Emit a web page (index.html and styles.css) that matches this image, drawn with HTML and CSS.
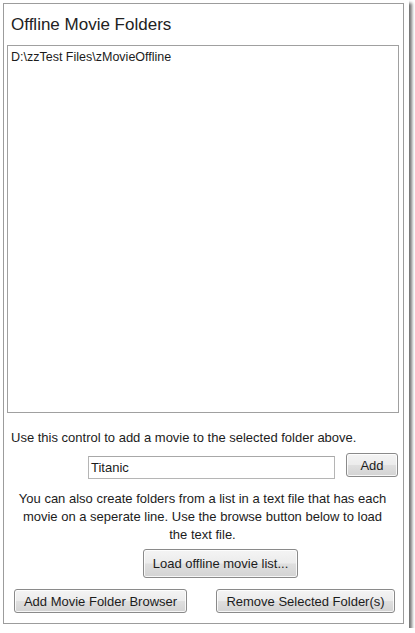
FILE: index.html
```html
<!DOCTYPE html>
<html>
<head>
<meta charset="utf-8">
<link rel="stylesheet" href="styles.css">
</head>
<body>
<div class="photo">
  <div class="panel">
    <div class="title">Offline Movie Folders</div>
    <div class="listbox">
      <div class="item">D:\zzTest Files\zMovieOffline</div>
    </div>
    <div class="label">Use this control to add a movie to the selected folder above.</div>
    <div class="add-row">
      <div class="textbox">Titanic</div>
      <div class="btn btn-add">Add</div>
    </div>
    <div class="info">You can also create folders from a list in a text file that has each movie on a seperate line. Use the browse button below to load the text file.</div>
    <div class="btn btn-load">Load offline movie list...</div>
    <div class="bottom-row">
      <div class="btn btn-browse">Add Movie Folder Browser</div>
      <div class="btn btn-remove">Remove Selected Folder(s)</div>
    </div>
  </div>
</div>
</body>
</html>
```
FILE: styles.css
```css
html, body {
  margin: 0;
  padding: 0;
  background: #ffffff;
}
body {
  font-family: "Liberation Sans", Arial, sans-serif;
  color: #1c1c1c;
  font-size: 13px;
}
.photo {
  width: 409px;
  height: 628px;
  box-sizing: border-box;
  padding: 3px 5px 4px 3px;
  background: #ffffff;
  box-shadow: 3px 3px 3px rgba(0, 0, 0, 0.55);
}
.panel {
  box-sizing: border-box;
  width: 401px;
  height: 621px;
  border: 1px solid #9c9c9c;
  background: #ffffff;
  display: flex;
  flex-direction: column;
  align-items: flex-start;
}
.title {
  margin: 11px 0 0 7px;
  font-size: 17px;
  line-height: 20px;
  color: #222;
}
.listbox {
  box-sizing: border-box;
  margin: 10px 0 0 3px;
  width: 392px;
  height: 368px;
  border: 1px solid #a0a0a0;
}
.item {
  padding: 4px 0 0 3px;
  line-height: 15px;
  font-size: 12.5px;
}
.label {
  margin: 17px 0 0 7px;
  line-height: 16px;
}
.add-row {
  display: flex;
  align-items: flex-start;
  margin-top: 7px;
}
.textbox {
  box-sizing: border-box;
  margin: 3px 0 0 84px;
  width: 247px;
  height: 23px;
  border: 1px solid #b5b5b5;
  border-top-color: #a8a8a8;
  padding: 3px 0 0 2px;
  line-height: 15px;
}
.btn {
  box-sizing: border-box;
  border: 1px solid #8a8a8a;
  border-radius: 3px;
  background: linear-gradient(#f4f4f4 0%, #ececec 48%, #dfdfdf 52%, #d3d3d3 100%);
  box-shadow: inset 0 0 0 1px rgba(255, 255, 255, 0.8);
  display: flex;
  align-items: center;
  justify-content: center;
  color: #1c1c1c;
}
.btn-add {
  margin-left: 11px;
  width: 52px;
  height: 24px;
}
.info {
  box-sizing: border-box;
  width: 100%;
  margin-top: 11px;
  padding: 0 11px 0 9px;
  text-align: center;
  line-height: 18px;
}
.btn-load {
  margin: 5px 0 0 139px;
  width: 155px;
  height: 29px;
}
.bottom-row {
  display: flex;
  margin-top: 11px;
}
.btn-browse {
  margin-left: 10px;
  width: 173px;
  height: 24px;
}
.btn-remove {
  margin-left: 29px;
  width: 179px;
  height: 24px;
}
```
